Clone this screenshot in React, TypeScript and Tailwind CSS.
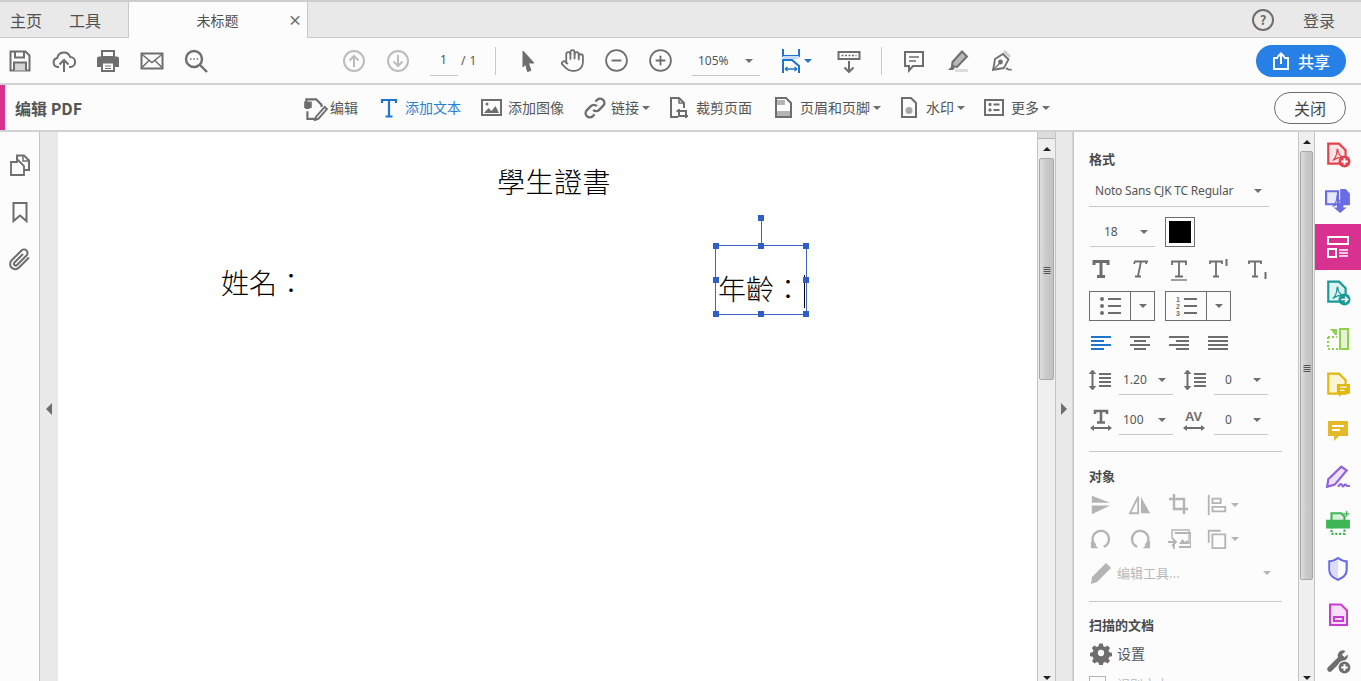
import React from "react";
import { Hand, CircleMinus, CirclePlus } from "lucide-react";

const G = "#6e6e6e";
const D = "#b4b4b4";

function I({ s = 24, c = G, w = 2, children }: { s?: number; c?: string; w?: number; children: React.ReactNode }) {
  return (
    <svg width={s} height={s} viewBox="0 0 24 24" fill="none" stroke={c} strokeWidth={w} strokeLinejoin="miter">
      {children}
    </svg>
  );
}

function Caret({ c = "border-t-[#6e6e6e]" }: { c?: string }) {
  return <div className={`w-0 h-0 border-x-[4px] border-x-transparent border-t-[4px] ${c}`} />;
}

function Box({ children }: { children: React.ReactNode }) {
  return <div className="w-10 h-[46px] flex items-center justify-center shrink-0">{children}</div>;
}

function Divider({ ml }: { ml: string }) {
  return <div className={`w-px h-7 bg-[#c8c8c8] shrink-0 ${ml}`} />;
}

const Acro = ({ c }: { c: string }) => (
  <path d="M7 17c2-1 4-5 4-9 0-2 1-2 1 0 0 3 2 5 5 6-3 0-7 1-10 3z" stroke={c} strokeWidth={1.1} fill="none" />
);

function TabBar() {
  return (
    <div className="h-[38px] bg-[#e9e9e9] border-t-2 border-t-[#cdcdcd] border-b border-b-[#c8c8c8] flex items-stretch text-[16px] text-[#505050] shrink-0">
      <div className="w-[129px] flex items-center border-r border-[#c8c8c8] pl-[10px] gap-[27px] -mb-px">
        <span>主页</span>
        <span>工具</span>
      </div>
      <div className="w-[179px] bg-[#fcfcfc] border-r border-[#c8c8c8] -mb-px flex items-center relative">
        <span className="w-full text-center text-[14px] pr-[1px]">未标题</span>
        <span className="absolute left-[159px] top-[8px] text-[14px] font-bold leading-[18px] text-[#6e6e6e]">×</span>
      </div>
      <div className="flex-1" />
      <div className="w-[22px] h-[22px] rounded-full border-2 border-[#6e6e6e] self-center flex items-center justify-center text-[13px] font-bold text-[#6e6e6e] leading-none mr-[29px]">
        ?
      </div>
      <span className="self-center text-[#555] mr-[26px]">登录</span>
    </div>
  );
}

function Toolbar() {
  return (
    <div className="h-[47px] bg-[#fcfcfc] border-b-2 border-b-[#d2d2d2] flex items-center shrink-0">
      <div className="flex gap-1">
        <Box>
          <I>
            <path d="M2.5 2.5h15l4 4v15h-19z" />
            <path d="M7 2.5v6h9v-6" />
            <path d="M6 21.5v-8h12v8" fill="#d4d4d4" />
          </I>
        </Box>
        <Box>
          <I>
            <path d="M7 18H6a4.6 4.6 0 0 1-.7-9.1A6.7 6.7 0 0 1 18.2 8a5 5 0 0 1-.2 10h-1" />
            <path d="M12 23V11M7.5 15.5 12 11l4.5 4.5" />
          </I>
        </Box>
        <Box>
          <I>
            <path d="M6 2h12v6H6z" fill="none" />
            <path d="M3 7.5h18a2 2 0 0 1 2 2V18h-5v-4H6v4H1V9.5a2 2 0 0 1 2-2z" fill={G} stroke="none" />
            <path d="M6 13.5h12V22H6z" />
            <path d="M9 17h6M9 19.5h6" strokeWidth={1} />
          </I>
        </Box>
        <Box>
          <I>
            <path d="M1.5 4.5h21v15h-21z" />
            <path d="M1.5 5 12 13.5 22.5 5M1.5 19 9 11.5M22.5 19 15 11.5" strokeWidth={1.5} />
          </I>
        </Box>
        <Box>
          <I w={2.4}>
            <circle cx="10" cy="10" r="8" />
            <path d="M16 16l7 7" />
            <path d="M6 10h1.5M9.3 10h1.5M12.6 10h1.5" strokeWidth={1.6} />
          </I>
        </Box>
      </div>
      <div className="flex gap-1 ml-[118px]">
        <Box>
          <I c="#bcbcbc">
            <circle cx="12" cy="12" r="10" />
            <path d="M12 18V7M7.5 11.5 12 7l4.5 4.5" />
          </I>
        </Box>
        <Box>
          <I c="#bcbcbc">
            <circle cx="12" cy="12" r="10" />
            <path d="M12 6v11M7.5 12.5 12 17l4.500-4.500" />
          </I>
        </Box>
      </div>
      <div className="w-7 ml-3 h-[29px] border-b border-[#c8c8c8] text-center text-[12px] text-[#555] font-['Noto_Sans'] leading-[26px] mt-[1px] pr-[1px]">
        1
      </div>
      <span className="w-[28px] ml-[3px] text-[12px] text-[#555] font-['Noto_Sans'] tracking-[0.5px] whitespace-nowrap">/ 1</span>
      <Divider ml="ml-[6px]" />
      <div className="flex gap-1 ml-3">
        <Box>
          <I s={24} c={G} w={1}>
            <path d="M7 2 18 14h-5.500l2.400 7.500-3.400 1L9.500 15 7 18z" fill={G} />
          </I>
        </Box>
        <Box>
          <Hand size={25} color={G} strokeWidth={1.7} />
        </Box>
        <Box>
          <CircleMinus size={25} color={G} strokeWidth={1.7} />
        </Box>
        <Box>
          <CirclePlus size={25} color={G} strokeWidth={1.7} />
        </Box>
      </div>
      <div className="w-[68px] ml-3 h-[29px] border-b border-[#c8c8c8] flex items-center justify-between pl-[6px] pr-[7px] text-[12px] text-[#555] font-['Noto_Sans'] mt-[1px]">
        <span>105%</span>
        <Caret />
      </div>
      <div className="ml-[19px] flex items-center w-[33px] shrink-0">
        <I s={24} c="#1f74cd" w={2}>
          <path d="M4 0v7h16V0" />
          <path d="M4 8.500h16" stroke="#c7dcf2" strokeWidth={3} />
          <path d="M4 24V11h9l7 6v7" />
          <path d="M6 20h12M6 20l2.500-2M6 20l2.500 2M18 20l-2.500-2M18 20l-2.500 2" strokeWidth={1.300} />
        </I>
        <div className="ml-[1px]">
          <Caret c="border-t-[#1f74cd]" />
        </div>
      </div>
      <div className="flex gap-1 ml-[17px]">
        <Box>
          <I>
            <path d="M1.500 3h21v7h-21z" />
            <path d="M4.500 6.500h15" strokeWidth={1.500} strokeDasharray="2 1.500" />
            <path d="M12 12v11M7.500 18.500 12 23l4.500-4.500" />
          </I>
        </Box>
      </div>
      <Divider ml="ml-[12px]" />
      <div className="flex gap-1 ml-[12px]">
        <Box>
          <I>
            <path d="M3 3h18v14h-10l-4 4.500V17H3z" />
            <path d="M7 8h10M7 12h7" strokeWidth={1.300} />
          </I>
        </Box>
        <Box>
          <I>
            <g transform="translate(-1 0)">
              <path d="M17 2.500 22 7.500 12 18l-5-1 .5-4z" fill="#b8b8b8" />
              <path d="M7 17l-4 4h5l2-2z" fill={G} stroke="none" />
              <path d="M10 21.500h13" stroke="#dcdcdc" strokeWidth={3} />
            </g>
          </I>
        </Box>
        <Box>
          <I w={1.800}>
            <g transform="translate(-1 0)">
              <path d="M14 5 19.500 10.500 15 19c-3.500.500-7 1-11 2 1-4 1.500-7.500 2-11z" />
              <path d="M4.500 20.500l6-6" strokeWidth={1.300} />
              <circle cx="11.500" cy="13" r="1.500" fill={G} />
              <path d="M15 2l6 6" stroke="#cfcfcf" strokeWidth={3} />
              <path d="M17 20.500c1-2 1.500-1.500 2 0s1-1.500 1.800 0 1 0 2 0" strokeWidth={1.300} />
            </g>
          </I>
        </Box>
      </div>
      <div className="flex-1" />
      <div className="w-[90px] h-[32px] rounded-full bg-[#2680e6] text-white flex items-center justify-center gap-[8px] text-[16px] font-medium mr-[15px]">
        <svg width="18" height="18" viewBox="0 0 18 18" fill="none" stroke="#fff" strokeWidth="2">
          <path d="M6 6H2v11h14V6h-4" />
          <path d="M9 12V2M5.500 5 9 1.500 12.500 5" />
        </svg>
        <span>共享</span>
      </div>
    </div>
  );
}

function EItem({ icon, label, caret, blue, gap = "gap-[6px]", ml }: { icon: React.ReactNode; label: string; caret?: boolean; blue?: boolean; gap?: string; ml: string }) {
  return (
    <div className={`flex items-center ${gap} ${ml} shrink-0`}>
      {icon}
      <div className="flex items-center gap-[3px]">
        <span className={blue ? "text-[#2a7fd4]" : ""}>{label}</span>
        {caret && <Caret />}
      </div>
    </div>
  );
}

function EditBar() {
  return (
    <div className="h-[47px] bg-[#fcfcfc] border-b-2 border-b-[#d2d2d2] flex items-center text-[14px] text-[#555] shrink-0">
      <div className="w-[5px] self-stretch bg-[#d9318f]" />
      <span className="ml-[10px] font-bold text-[16px] w-[68px] text-[#555] whitespace-nowrap">编辑 PDF</span>
      <EItem
        ml="ml-[219px]"
        gap="gap-[2px]"
        label="编辑"
        icon={
          <I s={26}>
            <path d="M7 12H4V4h9l5 5v2" />
            <path d="M2 6h7v6H2z" fill={G} stroke="none" />
            <path d="M5 15v7h9" />
            <path d="M21 11l2 2-8 9-3 1 1-3z" strokeWidth={1.800} />
          </I>
        }
      />
      <EItem
        ml="ml-[22px]"
        gap="gap-[7px]"
        blue
        label="添加文本"
        icon={
          <svg width="18" height="20" viewBox="0 0 18 20" fill="none" stroke="#1f74cd" strokeWidth="2.200">
            <path d="M2 5V2h14v3M9 2v16M5.500 18.500h7" />
          </svg>
        }
      />
      <EItem
        ml="ml-[20px]"
        gap="gap-[6px]"
        label="添加图像"
        icon={
          <svg width="21" height="17" viewBox="0 0 21 17" fill="none" stroke={G} strokeWidth="2">
            <path d="M1 1h19v15H1z" />
            <path d="M3 14l4.500-5 3 3 4-5L18 14z" fill={G} stroke="none" />
            <circle cx="6" cy="5" r="1.500" fill={G} stroke="none" />
          </svg>
        }
      />
      <EItem
        ml="ml-[20px]"
        gap="gap-[5px]"
        caret
        label="链接"
        icon={
          <svg width="22" height="22" viewBox="0 0 24 24" fill="none" stroke={G} strokeWidth="2.600">
            <path d="M10 14a4.500 4.500 0 0 0 6.500 0l4.500-4.500a4.600 4.600 0 0 0-6.500-6.500L12.500 5" />
            <path d="M14 10a4.500 4.500 0 0 0-6.500 0L3 14.500A4.600 4.600 0 0 0 9.500 21l2-2" />
          </svg>
        }
      />
      <EItem
        ml="ml-[19px]"
        gap="gap-[6px]"
        label="裁剪页面"
        icon={
          <svg width="21" height="22" viewBox="0 0 21 22" fill="none" stroke={G} strokeWidth="2">
            <path d="M9 20H2V1h8l5 5v5" />
            <path d="M10 1v5h5" strokeWidth="1.500" />
            <path d="M10 12v7h9M7.500 14H17v7" />
          </svg>
        }
      />
      <EItem
        ml="ml-[22px]"
        gap="gap-[7px]"
        caret
        label="页眉和页脚"
        icon={
          <svg width="19" height="21" viewBox="0 0 19 21" fill="none" stroke={G} strokeWidth="2">
            <path d="M2 1h10l5 5v14H2z" />
            <path d="M3 3h8v5H3zM3 14h13v5H3z" fill="#b4b4b4" stroke="none" />
          </svg>
        }
      />
      <EItem
        ml="ml-[19px]"
        gap="gap-[8px]"
        caret
        label="水印"
        icon={
          <svg width="18" height="21" viewBox="0 0 18 21" fill="none" stroke={G} strokeWidth="2">
            <path d="M2 1h9l5 5v14H2z" />
            <circle cx="9" cy="13.500" r="3.500" fill="#a8a8a8" stroke="none" />
          </svg>
        }
      />
      <EItem
        ml="ml-[19px]"
        gap="gap-[7px]"
        caret
        label="更多"
        icon={
          <svg width="20" height="17" viewBox="0 0 20 17" fill="none" stroke={G} strokeWidth="2">
            <path d="M1 1h18v15H1z" />
            <path d="M5 4.500h2v2H5zM5 10h2v2H5z" fill={G} strokeWidth="1" />
            <path d="M9.500 5.500h6M9.500 11h6" />
          </svg>
        }
      />
      <div className="flex-1" />
      <div className="w-[72px] h-[32px] rounded-full border border-[#6e6e6e] flex items-center justify-center mr-[15px] text-[16px] text-[#444]">
        关闭
      </div>
    </div>
  );
}

function LeftPanel() {
  return (
    <>
      <div className="w-[40px] bg-[#fcfcfc] border-r border-[#c4c4c4] flex flex-col items-center shrink-0 pt-[21px] gap-[23px]">
        <I s={24}>
          <path d="M9 7V2.500h7l5 5V17h-5" />
          <path d="M3 9h6v-2h1l6 6v9H3z" strokeWidth={1.800} />
          <path d="M15 3v5h6" strokeWidth={1.500} />
        </I>
        <I s={24}>
          <path d="M5.500 3h13v18L12 15.500 5.500 21z" />
        </I>
        <svg width="24" height="24" viewBox="0 0 24 24" fill="none" stroke={G} strokeWidth="2">
          <path d="M21 10.500 11 20.500a5 5 0 0 1-7.500-7L13.500 3.500a3.500 3.500 0 0 1 5 5L9 18a1.500 1.500 0 0 1-2.500-2.500L15 7" />
        </svg>
      </div>
      <div className="w-[18px] bg-[#e9e9e9] flex flex-col items-center shrink-0 pt-[271px]">
        <div className="w-0 h-0 border-y-[6px] border-y-transparent border-r-[6px] border-r-[#6e6e6e]" />
      </div>
    </>
  );
}

function Handle({ cls }: { cls: string }) {
  return <div className={`absolute w-[6px] h-[6px] bg-[#2f5fc4] ${cls}`} />;
}

function Doc() {
  return (
    <div className="flex-1 bg-white relative overflow-hidden text-black text-[28px] leading-[40px] [font-family:'Noto_Sans_CJK_TC',sans-serif] font-light">
      <div className="absolute left-[439px] top-[29px] whitespace-nowrap tracking-[0.5px]">學生證書</div>
      <div className="absolute left-[163px] top-[130px] whitespace-nowrap">姓名：</div>
      <div className="absolute left-[657px] top-[113px] w-[92px] h-[70px] border border-[#3a66c4]">
        <div className="absolute left-[2px] top-[22px] whitespace-nowrap">年齡：</div>
        <div className="absolute left-[88px] top-[29px] w-px h-[33px] bg-black" />
        <div className="absolute left-[45px] -top-[27px] w-px h-[27px] bg-[#3a66c4]" />
        <Handle cls="left-[42px] -top-[31px]" />
        <Handle cls="-left-[3px] -top-[3px]" />
        <Handle cls="left-[42px] -top-[3px]" />
        <Handle cls="left-[87px] -top-[3px]" />
        <Handle cls="-left-[3px] top-[31px]" />
        <Handle cls="left-[87px] top-[31px]" />
        <Handle cls="-left-[3px] top-[65px]" />
        <Handle cls="left-[42px] top-[65px]" />
        <Handle cls="left-[87px] top-[65px]" />
      </div>
    </div>
  );
}

function Scroll({ top, thumb, w, gripTop }: { top: number; thumb: number; w: string; gripTop: string }) {
  return (
    <div className={`${w} bg-[#efefef] border-x border-[#c4c4c4] flex flex-col items-center shrink-0 relative`}>
      {top > 0 && <div className="w-full h-[7px] bg-[#dcdcdc] border-b border-[#b8b8b8] shrink-0" />}
      <div className="h-[19px] flex items-center justify-center shrink-0">
        <div className="w-0 h-0 border-x-[4px] border-x-transparent border-b-[4px] border-b-[#222]" />
      </div>
      <div
        className="w-[calc(100%-2px)] rounded-[2px] border border-[#a8a8a8] bg-gradient-to-r from-[#dedede] via-[#c9c9c9] to-[#c2c2c2] relative shrink-0"
        style={{ height: thumb }}
      >
        <div className={`absolute left-1/2 -translate-x-1/2 ${gripTop} w-[7px] flex flex-col gap-[1px]`}>
          <div className="h-px bg-[#555]" />
          <div className="h-px bg-[#555]" />
          <div className="h-px bg-[#555]" />
          <div className="h-px bg-[#555]" />
        </div>
      </div>
      <div className="flex-1" />
      <div className="h-[8px] flex items-end justify-center shrink-0 pb-[1px]">
        <div className="w-0 h-0 border-x-[4px] border-x-transparent border-t-[4px] border-t-[#222]" />
      </div>
    </div>
  );
}

function Sel({ v, w = "w-[54px]", cls = "" }: { v: string; w?: string; cls?: string }) {
  return (
    <div className={`${w} h-[29px] border-b border-[#c8c8c8] flex items-center justify-between pr-[7px] pl-[4px] text-[12px] text-[#555] font-['Noto_Sans'] shrink-0 ${cls}`}>
      <span>{v}</span>
      <Caret />
    </div>
  );
}

const TT = ({ italic, under, sup, sub }: { italic?: boolean; under?: boolean; sup?: boolean; sub?: boolean }) => (
  <div className="w-6 h-6 flex items-center justify-center">
    <svg width="24" height="24" viewBox="0 0 24 24" fill="none" stroke={G} strokeWidth={italic || under || sup || sub ? 1.800 : 3}>
      {italic ? (
        <path d="M6 7l1-2.500h12L18 7M13 4.500 10 19M7 19.500h6" />
      ) : (
        <path d={sup || sub ? "M4 7V4.500h12V7M10 4.500v14.500M7 19.500h6" : "M5 8V4.500h14V8M12 4.500V19M8 19.500h8"} />
      )}
      {under && <path d="M4 23h16" strokeWidth={1.300} />}
      {sup && <path d="M20.500 2v7" strokeWidth={2} />}
      {sub && <path d="M20.500 15v7" strokeWidth={2} />}
    </svg>
  </div>
);

const ListBox = ({ num }: { num?: boolean }) => (
  <div className="w-[66px] h-[30px] border border-[#6e6e6e] flex shrink-0">
    <div className="w-[41px] border-r border-[#6e6e6e] flex items-center justify-center">
      <svg width="24" height="22" viewBox="0 0 24 22" stroke={G} strokeWidth="2" fill={G}>
        {num ? (
          <>
            <text x="2" y="7" fontSize="7" stroke="none" fontWeight="700" fontFamily="Liberation Sans">1</text>
            <text x="2" y="14" fontSize="7" stroke="none" fontWeight="700" fontFamily="Liberation Sans">2</text>
            <text x="2" y="21" fontSize="7" stroke="none" fontWeight="700" fontFamily="Liberation Sans">3</text>
          </>
        ) : (
          <>
            <circle cx="4" cy="4" r="2" stroke="none" />
            <circle cx="4" cy="11" r="2" stroke="none" />
            <circle cx="4" cy="18" r="2" stroke="none" />
          </>
        )}
        <path d="M10 4h13M10 11h13M10 18h13" />
      </svg>
    </div>
    <div className="flex-1 flex items-center justify-center">
      <Caret />
    </div>
  </div>
);

const Align = ({ d, c = G }: { d: string; c?: string }) => (
  <div className="w-6 h-6 flex items-center justify-center">
    <svg width="20" height="16" viewBox="0 0 20 16" stroke={c} strokeWidth="2" fill="none">
      <path d={d} />
    </svg>
  </div>
);

const SpacingIcon = () => (
  <svg width="22" height="22" viewBox="0 0 22 22" fill="none" stroke={G}>
    <path d="M3.500 3v16" strokeWidth="2" />
    <path d="M0.500 4.500 3.500 1l3 3.500zM0.500 17.500 3.500 21l3-3.500z" fill={G} strokeWidth="1" />
    <path d="M10 5h12M10 9h12M10 13h12M10 17h12" strokeWidth="2" />
  </svg>
);

function Right() {
  const ico = "w-6 h-6 flex items-center justify-center shrink-0";
  return (
    <div className="w-[225px] bg-[#fcfcfc] border-l border-[#c8c8c8] pl-[15px] shrink-0 flex flex-col text-[#555] overflow-hidden">
      <div className="mt-[19px] h-4 leading-4 text-[13px] font-bold text-[#4a4a4a] shrink-0">格式</div>
      <div className="mt-[9px] w-[180px] h-[31px] border-b border-[#c8c8c8] flex items-center justify-between pl-[6px] pr-[7px] text-[12px] font-['Noto_Sans'] text-[#555] shrink-0">
        <span className="whitespace-nowrap tracking-[-0.2px]">Noto Sans CJK TC Regular</span>
        <Caret />
      </div>
      <div className="mt-[10px] h-[30px] flex items-stretch shrink-0">
        <Sel v="18" w="w-[65px] h-[30px] ml-[1px]" cls="pl-[14px]" />
        <div className="ml-[10px] w-[30px] h-[30px] border border-[#6e6e6e] bg-white p-[3px]">
          <div className="w-full h-full bg-black" />
        </div>
      </div>
      <div className="mt-[10px] h-6 flex gap-[15px] shrink-0">
        <TT />
        <TT italic />
        <TT under />
        <TT sup />
        <TT sub />
      </div>
      <div className="mt-[10px] flex gap-[10px] shrink-0">
        <ListBox />
        <ListBox num />
      </div>
      <div className="mt-[10px] h-6 flex gap-[15px] shrink-0">
        <Align c="#1f74cd" d="M0 2h20M0 6h13M0 10h20M0 14h13" />
        <Align d="M0 2h20M4 6h12M0 10h20M4 14h12" />
        <Align d="M0 2h20M7 6h13M0 10h20M7 14h13" />
        <Align d="M0 2h20M0 6h20M0 10h20M0 14h20" />
      </div>
      <div className="mt-[11px] flex items-center shrink-0">
        <div className="w-[22px] shrink-0 -mt-[2px]"><SpacingIcon /></div>
        <Sel v="1.20" cls="ml-[8px]" />
        <div className="w-[22px] ml-[11px] shrink-0 -mt-[2px]"><SpacingIcon /></div>
        <Sel v="0" cls="ml-[8px] pl-[11px]" />
      </div>
      <div className="mt-[11px] flex items-center shrink-0">
        <div className="w-[22px] shrink-0">
          <svg width="24" height="24" viewBox="0 0 24 24" fill="none" stroke={G} className="-mt-[2px]">
            <path d="M6 6V3h12v3M12 3v11M8 14.500h8" strokeWidth="2.600" />
            <path d="M2 20h20" strokeWidth="2" />
            <path d="M5 17v6L1 20zM19 17v6l4-3z" fill={G} stroke="none" />
          </svg>
        </div>
        <Sel v="100" cls="ml-[8px]" />
        <div className="w-[24px] ml-[9px] shrink-0">
          <svg width="24" height="24" viewBox="0 0 24 24" fill="none" stroke={G} className="-mt-[2px]">
            <text x="3" y="13" fontSize="13" fontWeight="700" fontFamily="Liberation Sans" fill={G} stroke="none">AV</text>
            <path d="M2 20h20" strokeWidth="2" />
            <path d="M5 17v6L1 20zM19 17v6l4-3z" fill={G} stroke="none" />
          </svg>
        </div>
        <Sel v="0" cls="ml-[8px] pl-[11px]" />
      </div>
      <div className="mt-[16px] w-[193px] h-px bg-[#c8c8c8] shrink-0" />
      <div className="mt-[16px] h-4 leading-4 text-[13px] font-bold text-[#4a4a4a] shrink-0">对象</div>
      <div className="mt-[9px] h-6 flex gap-[15px] shrink-0">
        <div className={ico}>
          <I s={22} c={D} w={1.500}>
            <path d="M2 2l20 7.500H2z" fill={D} stroke="none" />
            <path d="M2 12.500h20L2 22z" fill={D} stroke="none" />
          </I>
        </div>
        <div className={ico}>
          <I s={22} c={D} w={2}>
            <path d="M10 3v18H1z" />
            <path d="M13 3v18h10z" fill={D} stroke="none" />
          </I>
        </div>
        <div className={ico}>
          <I s={24} c={D} w={2.400}>
            <path d="M7 1v15h14M2 6h15v15" />
          </I>
        </div>
        <div className="flex items-center gap-[3px] shrink-0">
          <I s={22} c={D} w={2}>
            <path d="M3 1v22" />
            <path d="M7 5h9v5H7zM7 14h14v5H7z" />
          </I>
          <Caret c="border-t-[#b4b4b4]" />
        </div>
      </div>
      <div className="mt-[10px] h-6 flex gap-[15px] shrink-0">
        <div className={ico}>
          <I s={22} c={D} w={2.400}>
            <path d="M6 19A9 9 0 1 1 15 20.500" />
            <path d="M1 14v8h8z" fill={D} stroke="none" />
          </I>
        </div>
        <div className={ico}>
          <I s={22} c={D} w={2.400}>
            <path d="M18 19A9 9 0 1 0 9 20.500" />
            <path d="M23 14v8h-8z" fill={D} stroke="none" />
          </I>
        </div>
        <div className={ico}>
          <I s={24} c={D} w={1.800}>
            <path d="M5 11V3h17v14" strokeWidth={1.400} />
            <path d="M8 6h16v14H12" />
            <path d="M12 17l3.500-5 2.500 3 2-2 2.500 4z" fill={D} stroke="none" />
            <path d="M1 15h8M5 11l4 4-4 4M7 15v7" />
          </I>
        </div>
        <div className="flex items-center gap-[3px] shrink-0">
          <I s={22} c={D} w={2}>
            <path d="M3 16V3h13" />
            <path d="M7 7h14v15H7z" />
          </I>
          <Caret c="border-t-[#b4b4b4]" />
        </div>
      </div>
      <div className="mt-[10px] h-6 w-[180px] flex items-center shrink-0 text-[#b9b9b9] text-[13px]">
        <I s={24} c={D} w={1}>
          <path d="M17 2l5 5L8 21l-6 2 1-7z" fill={D} stroke="none" />
        </I>
        <span className="ml-[4px] flex-1">编辑工具...</span>
        <div className="mr-[-2px]"><Caret c="border-t-[#b4b4b4]" /></div>
      </div>
      <div className="mt-[16px] w-[193px] h-px bg-[#c8c8c8] shrink-0" />
      <div className="mt-[15px] h-4 leading-4 text-[13px] font-bold text-[#4a4a4a] shrink-0">扫描的文档</div>
      <div className="mt-[8px] h-6 flex items-center shrink-0 text-[14px] text-[#555]">
        <svg width="24" height="24" viewBox="0 0 24 24" fill={G}>
          <path fillRule="evenodd" d="M10 1.500h4l.6 3 2 .9 2.600-1.700 2.800 2.800-1.700 2.600.9 2 3 .6v4l-3 .6-.9 2 1.700 2.600-2.800 2.800-2.600-1.700-2 .9-.6 3h-4l-.6-3-2-.9-2.600 1.700-2.800-2.800 1.700-2.600-.9-2-3-.6v-4l3-.6.9-2L1.800 6.500 4.600 3.700l2.600 1.700 2-.9zM12 8.500a3.500 3.500 0 1 0 0 7 3.500 3.500 0 0 0 0-7z" transform="translate(1.200 1.200) scale(.9)" />
        </svg>
        <span className="ml-[4px]">设置</span>
      </div>
      <div className="mt-[11px] flex items-start shrink-0">
        <div className="w-[17px] h-[17px] border border-[#b4b4b4]" />
        <span className="ml-[11px] text-[13px] text-[#c4c4c4] leading-4">识别文本</span>
      </div>
    </div>
  );
}

function RailBtn({ active, children }: { active?: boolean; children: React.ReactNode }) {
  return <div className={`h-[46px] flex items-center justify-center shrink-0 ${active ? "bg-[#d9318f]" : ""}`}>{children}</div>;
}

const Doc2 = ({ c, fill = "none" }: { c: string; fill?: string }) => <path d="M3 1.500h10l6 6V20H3z" stroke={c} strokeWidth={2} fill={fill} />;

function Rail() {
  return (
    <div className="w-[46px] bg-[#fcfcfc] shrink-0 flex flex-col overflow-hidden">
      <RailBtn>
        <svg width="26" height="26" viewBox="0 0 24 24" fill="none">
          <Doc2 c="#e5414c" fill="#fbe6e7" />
          <Acro c="#e5414c" />
          <circle cx="18" cy="18" r="5.500" fill="#e5414c" />
          <path d="M15 18h6M18 15v6" stroke="#fff" strokeWidth={1.800} />
        </svg>
      </RailBtn>
      <RailBtn>
        <svg width="26" height="26" viewBox="0 0 24 24" fill="none">
          <path d="M1 3h11v12H1z" stroke="#6a6ce6" strokeWidth={2} fill="#e8e8fb" />
          <Acro c="#6a6ce6" />
          <path d="M14 1h5l4 4v11h-9z" fill="#6a6ce6" />
          <path d="M11 14v4H8l6 5 6-5h-3v-4z" fill="#6a6ce6" />
        </svg>
      </RailBtn>
      <RailBtn active>
        <svg width="24" height="24" viewBox="0 0 24 24" fill="none" stroke="#fff" strokeWidth={2}>
          <path d="M2 2h20v7H2zM2 14h8v8H2z" />
          <path d="M13 15h9M13 18h9M13 21h9" strokeWidth={1.300} />
        </svg>
      </RailBtn>
      <RailBtn>
        <svg width="26" height="26" viewBox="0 0 24 24" fill="none">
          <Doc2 c="#1a9a96" fill="#dff2f1" />
          <Acro c="#1a9a96" />
          <circle cx="18" cy="18" r="5.500" fill="#1a9a96" />
          <path d="M15 18h6M18.500 15.500 21 18l-2.500 2.500" stroke="#fff" strokeWidth={1.500} />
        </svg>
      </RailBtn>
      <RailBtn>
        <svg width="24" height="24" viewBox="0 0 24 24" fill="none" stroke="#8fd14f" strokeWidth={2}>
          <path d="M14 2h8v20h-8z" fill="#e4f4d4" />
          <path d="M2 10h9M2 10v12h10" strokeDasharray="2 2" />
          <path d="M4 2h7v6H9L7 5.500z" fill="#8fd14f" stroke="none" />
        </svg>
      </RailBtn>
      <RailBtn>
        <svg width="26" height="26" viewBox="0 0 24 24" fill="none">
          <Doc2 c="#e3b80d" fill="#fbf4d2" />
          <path d="M11 11h12v9h-7l-3 3v-3h-2z" fill="#e3b80d" />
          <path d="M14 14h6M14 17h4" stroke="#fff" strokeWidth={1.200} />
        </svg>
      </RailBtn>
      <RailBtn>
        <svg width="24" height="24" viewBox="0 0 24 24">
          <path d="M2 2h20v15h-9l-5 5v-5H2z" fill="#e3b92a" />
          <path d="M6 7h12M6 11h8" stroke="#fff" strokeWidth={1.800} />
        </svg>
      </RailBtn>
      <RailBtn>
        <svg width="26" height="26" viewBox="0 0 24 24" fill="none" stroke="#9060dc" strokeWidth={2}>
          <path d="M15 2.500 20 6 9 19l-7 2 1-7z" fill="#ece3fa" />
          <path d="M12 21c2-3 3-3 4-1s2-2 3-1 1 2 4 1" />
        </svg>
      </RailBtn>
      <RailBtn>
        <svg width="26" height="26" viewBox="0 0 24 24" fill="none" stroke="#3eb655" strokeWidth={2}>
          <path d="M6 3h9l3 3v5H6z" fill="#d8f0dc" />
          <path d="M2 10h20v6H2z" fill="#3eb655" />
          <path d="M6 15v7h12v-7" strokeDasharray="2 1.500" />
          <path d="M20 1v5M17.500 3.500h5" strokeWidth={1.200} />
        </svg>
      </RailBtn>
      <RailBtn>
        <svg width="26" height="26" viewBox="0 0 24 24" fill="none" stroke="#6a6ce6" strokeWidth={2}>
          <path d="M12 2c3 2 5 3 8 3v8c0 5-4 7-8 9-4-2-8-4-8-9V5c3 0 5-1 8-3z" />
          <path d="M12 3v18c-4-2-7-4-7-8V6c3 0 5-1 7-3z" fill="#dcdcfa" stroke="none" />
        </svg>
      </RailBtn>
      <RailBtn>
        <svg width="24" height="24" viewBox="0 0 24 24" fill="none" stroke="#c83ad0" strokeWidth={2}>
          <path d="M4 1.500h11l6 6V22H4z" fill="#f6dff8" />
          <path d="M8 14h9v4H8z" />
        </svg>
      </RailBtn>
      <RailBtn>
        <svg width="26" height="26" viewBox="0 0 24 24" fill="none">
          <path d="M17 2a5 5 0 0 0-5 6.500L2.500 18a2.500 2.500 0 0 0 3.500 3.500l9.500-9.500A5 5 0 0 0 21 6l-3 2.500-2.500-2.500L19 3z" fill={G} />
          <circle cx="18" cy="18" r="6" fill={G} stroke="#fcfcfc" strokeWidth="1" />
          <path d="M15 18h6M18 15v6" stroke="#fff" strokeWidth={1.800} />
        </svg>
      </RailBtn>
    </div>
  );
}

export default function App() {
  return (
    <div className="w-[1361px] h-[681px] overflow-hidden flex flex-col bg-white [font-family:'Noto_Sans_CJK_SC',sans-serif]">
      <TabBar />
      <Toolbar />
      <EditBar />
      <div className="flex h-[549px] overflow-hidden">
        <LeftPanel />
        <Doc />
        <Scroll top={7} thumb={222} w="w-[19px]" gripTop="top-[108px]" />
        <div className="w-[17px] bg-[#e9e9e9] border-r border-[#d4d4d4] flex flex-col items-center shrink-0 pt-[271px]">
          <div className="w-0 h-0 border-y-[6px] border-y-transparent border-l-[6px] border-l-[#6e6e6e]" />
        </div>
        <Right />
        <Scroll top={0} thumb={429} w="w-[17px]" gripTop="top-[213px]" />
        <Rail />
      </div>
    </div>
  );
}
